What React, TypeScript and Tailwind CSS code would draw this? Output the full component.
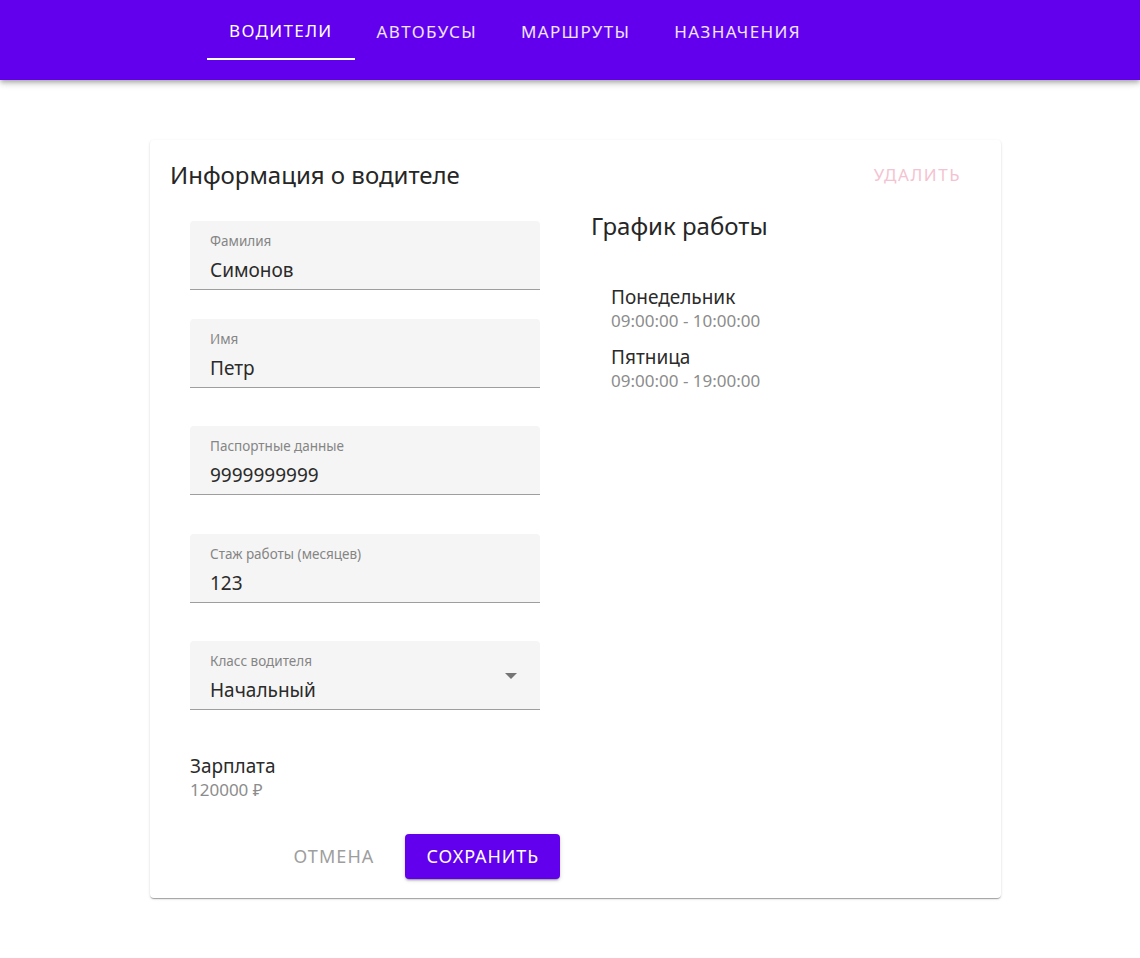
import { ReactNode } from "react";

const tabs = ["Водители", "Автобусы", "Маршруты", "Назначения"];

const schedule = [
  { day: "Понедельник", time: "09:00:00 - 10:00:00" },
  { day: "Пятница", time: "09:00:00 - 19:00:00" },
];

function Field({
  label,
  value,
  className,
  children,
}: {
  label: string;
  value: string;
  className?: string;
  children?: ReactNode;
}) {
  return (
    <div
      className={`relative h-[69px] w-[350px] rounded-t-[4px] border-b border-[#9e9e9e] bg-[#f5f5f5] px-5 ${className ?? ""}`}
    >
      <div className="pt-3 text-[13.5px] leading-4 text-[#858585]">{label}</div>
      <div className="mt-[9px] text-[19px] leading-6 text-[#2b2b2b]">{value}</div>
      {children}
    </div>
  );
}

export default function App() {
  return (
    <div
      className="min-h-[958px] bg-white"
      style={{ fontFamily: '"Noto Sans", "Open Sans", sans-serif' }}
    >
      <header className="relative z-10 h-20 bg-[#6200ee] shadow-[0_2px_4px_-1px_rgba(0,0,0,0.2),0_4px_5px_0_rgba(0,0,0,0.14),0_1px_10px_0_rgba(0,0,0,0.12)]">
        <nav className="flex pl-[207px]">
          {tabs.map((t, i) => (
            <div
              key={t}
              className={`flex h-[60px] items-center px-[22px] pt-[3px] text-[17px] uppercase tracking-[0.08em] ${
                i === 0
                  ? "border-b-2 border-white text-white"
                  : "text-white/90"
              }`}
            >
              {t}
            </div>
          ))}
        </nav>
      </header>

      <main className="pt-[60px]">
        <div className="ml-[150px] w-[851px] rounded-[4px] bg-white px-5 pb-[19px] pt-[17px] shadow-[0_2px_1px_-1px_rgba(0,0,0,0.2),0_1px_1px_0_rgba(0,0,0,0.14),0_1px_3px_0_rgba(0,0,0,0.12)]">
          <div className="flex items-center justify-between">
            <h1 className="text-[24px] leading-8 text-[#262626]">Информация о водителе</h1>
            <button className="h-9 px-[20px] text-[17px] uppercase tracking-[0.09em] text-[#f4c3d1]">
              Удалить
            </button>
          </div>

          <div className="flex">
            <div className="w-[390px]">
              <div className="pl-5 pt-[28px]">
                <Field label="Фамилия" value="Симонов" className="mb-[29px]" />
                <Field label="Имя" value="Петр" className="mb-[38px]" />
                <Field label="Паспортные данные" value="9999999999" className="mb-[39px]" />
                <Field label="Стаж работы (месяцев)" value="123" className="mb-[38px]" />
                <Field label="Класс водителя" value="Начальный">
                  <svg
                    className="absolute right-[23px] top-[32px]"
                    width="12"
                    height="6"
                    viewBox="0 0 10 5"
                  >
                    <path d="M0 0l5 5 5-5z" fill="#757575" />
                  </svg>
                </Field>

                <div className="mt-[44px]">
                  <div className="text-[19px] leading-6 text-[#2b2b2b]">Зарплата</div>
                  <div className="text-[17px] leading-6 text-[#8c8c8c]">120000 ₽</div>
                </div>
              </div>

              <div className="mt-8 flex justify-end gap-[10px]">
                <button className="h-[45px] px-[21px] text-[18px] uppercase tracking-[0.06em] text-[#9e9e9e]">
                  Отмена
                </button>
                <button className="h-[45px] rounded-[4px] bg-[#6200ee] px-[21px] text-[18px] uppercase tracking-[0.05em] text-white shadow-[0_3px_1px_-2px_rgba(0,0,0,0.2),0_2px_2px_0_rgba(0,0,0,0.14),0_1px_5px_0_rgba(0,0,0,0.12)]">
                  Сохранить
                </button>
              </div>
            </div>

            <div className="ml-[31px] pt-[17px]">
              <h2 className="text-[24px] leading-8 text-[#262626]">График работы</h2>
              <div className="mt-[43px] flex flex-col gap-3 pl-5">
                {schedule.map((s) => (
                  <div key={s.day}>
                    <div className="text-[19px] leading-6 text-[#2b2b2b]">{s.day}</div>
                    <div className="text-[17px] leading-6 text-[#8c8c8c]">{s.time}</div>
                  </div>
                ))}
              </div>
            </div>
          </div>
        </div>
      </main>
    </div>
  );
}
